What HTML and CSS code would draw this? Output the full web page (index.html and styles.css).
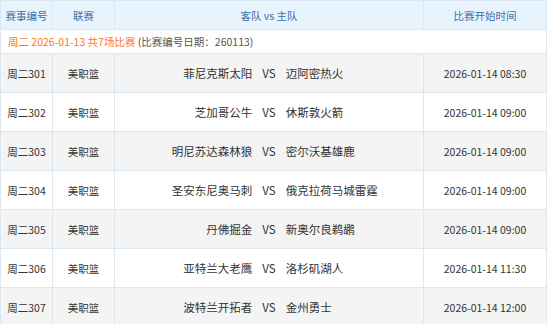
FILE: index.html
```html
<!DOCTYPE html>
<html lang="zh-CN">
<head>
<meta charset="utf-8">
<title>赛事列表</title>
<link rel="stylesheet" href="styles.css">
</head>
<body>
<table class="matches">
  <colgroup>
    <col class="c-no">
    <col class="c-league">
    <col class="c-teams">
    <col class="c-time">
  </colgroup>
  <thead>
    <tr class="head">
      <th>赛事编号</th>
      <th>联赛</th>
      <th>客队 vs 主队</th>
      <th>比赛开始时间</th>
    </tr>
  </thead>
  <tbody>
    <tr class="date-row">
      <td colspan="4"><span class="date-main">周二 2026-01-13 共7场比赛</span> <span class="date-sub">(比赛编号日期：260113)</span></td>
    </tr>
    <tr class="row alt">
      <td>周二301</td><td>美职篮</td>
      <td><div class="teams"><span class="away">菲尼克斯太阳</span><span class="vs">VS</span><span class="home">迈阿密热火</span></div></td>
      <td>2026-01-14 08:30</td>
    </tr>
    <tr class="row">
      <td>周二302</td><td>美职篮</td>
      <td><div class="teams"><span class="away">芝加哥公牛</span><span class="vs">VS</span><span class="home">休斯敦火箭</span></div></td>
      <td>2026-01-14 09:00</td>
    </tr>
    <tr class="row alt">
      <td>周二303</td><td>美职篮</td>
      <td><div class="teams"><span class="away">明尼苏达森林狼</span><span class="vs">VS</span><span class="home">密尔沃基雄鹿</span></div></td>
      <td>2026-01-14 09:00</td>
    </tr>
    <tr class="row">
      <td>周二304</td><td>美职篮</td>
      <td><div class="teams"><span class="away">圣安东尼奥马刺</span><span class="vs">VS</span><span class="home">俄克拉荷马城雷霆</span></div></td>
      <td>2026-01-14 09:00</td>
    </tr>
    <tr class="row alt">
      <td>周二305</td><td>美职篮</td>
      <td><div class="teams"><span class="away">丹佛掘金</span><span class="vs">VS</span><span class="home">新奥尔良鹈鹕</span></div></td>
      <td>2026-01-14 09:00</td>
    </tr>
    <tr class="row">
      <td>周二306</td><td>美职篮</td>
      <td><div class="teams"><span class="away">亚特兰大老鹰</span><span class="vs">VS</span><span class="home">洛杉矶湖人</span></div></td>
      <td>2026-01-14 11:30</td>
    </tr>
    <tr class="row alt">
      <td>周二307</td><td>美职篮</td>
      <td><div class="teams"><span class="away">波特兰开拓者</span><span class="vs">VS</span><span class="home">金州勇士</span></div></td>
      <td>2026-01-14 12:00</td>
    </tr>
  </tbody>
</table>
</body>
</html>
```
FILE: styles.css
```css
html, body {
  margin: 0;
  padding: 0;
  background: #ffffff;
}
body {
  font-family: "Noto Sans CJK SC", "Noto Sans", sans-serif;
  font-size: 10.5px;
  color: #333333;
}
.matches {
  width: 546px;
  border-collapse: collapse;
  table-layout: fixed;
}
.c-no { width: 52px; }
.c-league { width: 62px; }
.c-teams { width: 309px; }
.c-time { width: 123px; }

.matches th,
.matches td {
  border: 1px solid #dbe8f3;
  padding: 0;
  text-align: center;
  vertical-align: middle;
  white-space: nowrap;
}
.head th {
  height: 28px;
  background: #e8f4fd;
  color: #3d6ea8;
  font-weight: normal;
  font-size: 10.5px;
}
.date-row td {
  height: 23px;
  text-align: left;
  padding-left: 7px;
  background: #ffffff;
}
.date-main {
  color: #ff7622;
}
.date-sub {
  color: #555555;
}
.row td {
  height: 38px;
  background: #ffffff;
}
.row.alt td {
  background: #f4f4f4;
}
.teams {
  display: grid;
  grid-template-columns: 1fr auto 1fr;
  column-gap: 10px;
  align-items: center;
  font-size: 11.5px;
}
.away { text-align: right; }
.home { text-align: left; }
.vs { font-size: 11.5px; }
```
